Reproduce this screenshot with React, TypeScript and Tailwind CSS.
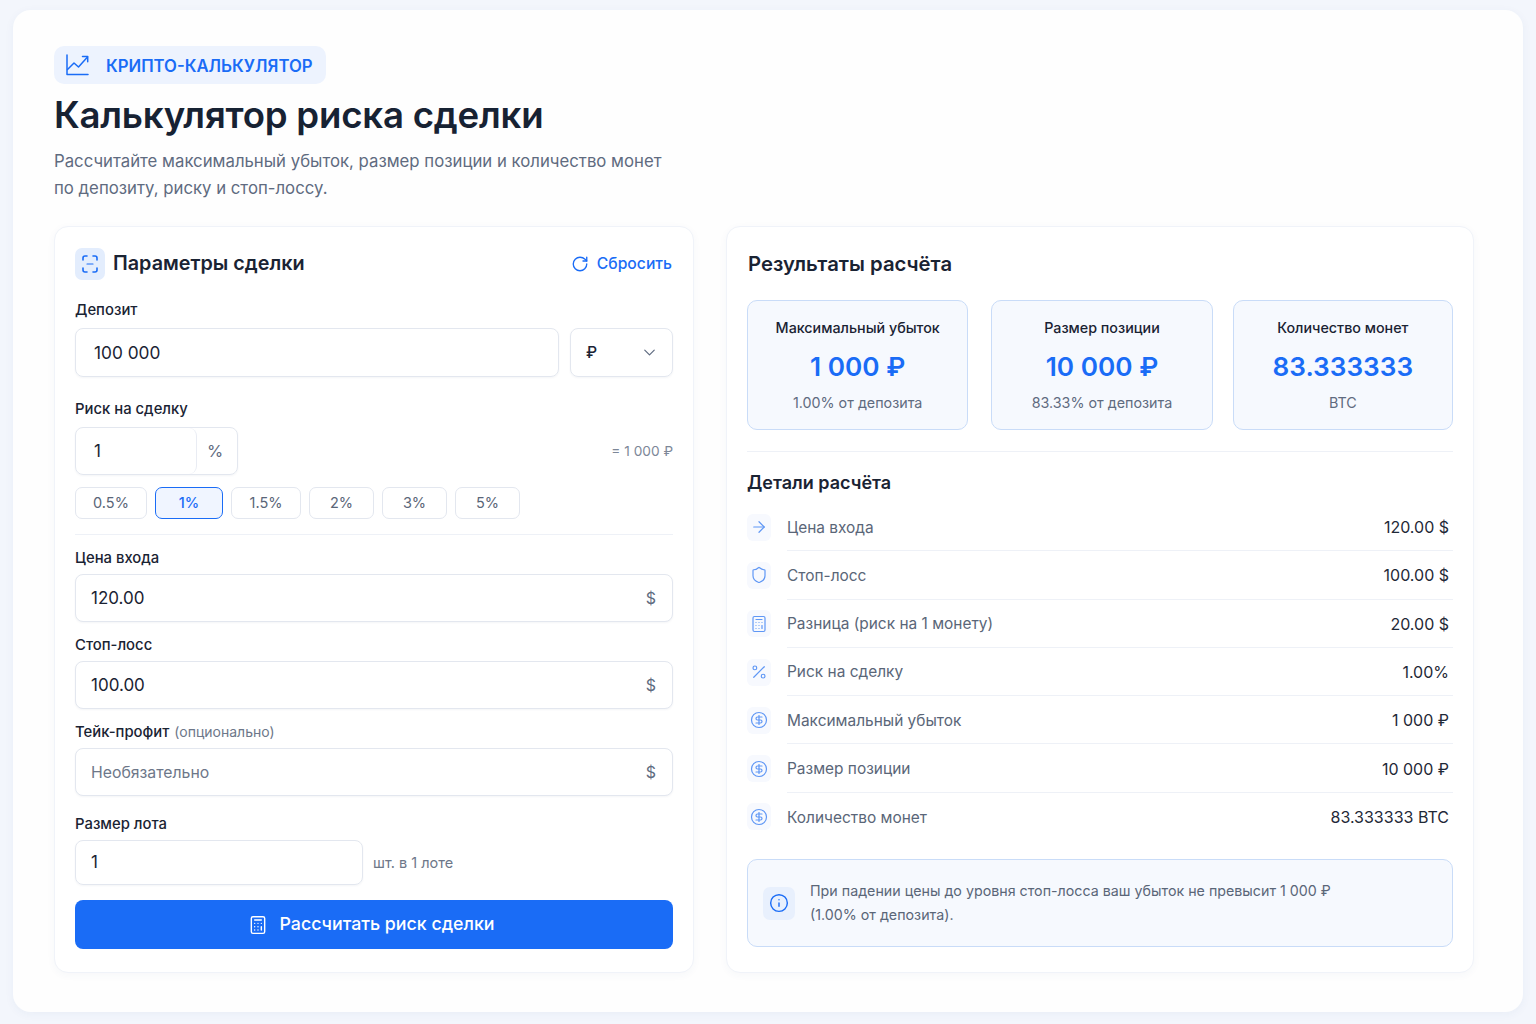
import { ArrowRight, Calculator, ChevronDown, CircleDollarSign, Info, Percent, RotateCw, Shield } from "lucide-react";
import type { ReactNode } from "react";

function Label({ children, className = "" }: { children: ReactNode; className?: string }) {
  return <div className={`text-[14.85px] leading-[20px] font-medium text-[#1a2333] ${className}`}>{children}</div>;
}

function DollarInput({ value, placeholder = false, className = "" }: { value: string; placeholder?: boolean; className?: string }) {
  return (
    <div className={`flex items-center justify-between h-[48px] rounded-[8px] border border-[#e3e7ef] bg-white pl-[15px] pr-[16px] shadow-[0_1px_2px_rgba(30,50,90,0.05)] ${className}`}>
      <span className={placeholder ? "pt-px text-[15.8px] text-[#6d7789]" : "pt-px text-[17px] text-[#1a2333]"}>{value}</span>
      <span className="text-[16px] text-[#5f6b80]">$</span>
    </div>
  );
}

function Chip({ label, w, active = false }: { label: string; w: string; active?: boolean }) {
  return (
    <div className={`${w} h-[32px] flex items-center justify-center rounded-[7px] border text-[14.5px] ${active ? "border-[#1a6cf6] bg-[#f0f5ff] text-[#1a6cf6] font-medium" : "border-[#e3e7ef] bg-white text-[#5a6678]"}`}>
      {label}
    </div>
  );
}

function Stat({ title, value, sub, w }: { title: string; value: string; sub: string; w: string }) {
  return (
    <div className={`${w} h-[130px] flex flex-col items-center rounded-[10px] border border-[#c9dcf8] bg-[#f6f9fe] pt-[17px]`}>
      <div className="text-[14.3px] leading-[20px] font-medium text-[#1a2333]">{title}</div>
      <div className="mt-[11px] text-[26.2px] leading-[36px] font-semibold text-[#1a6cf6]">{value}</div>
      <div className="mt-[8px] text-[14.3px] leading-[20px] text-[#5f6b80]">{sub}</div>
    </div>
  );
}

const rows = [
  { Icon: ArrowRight, label: "Цена входа", value: "120.00 $" },
  { Icon: Shield, label: "Стоп-лосс", value: "100.00 $" },
  { Icon: Calculator, label: "Разница (риск на 1 монету)", value: "20.00 $" },
  { Icon: Percent, label: "Риск на сделку", value: "1.00%" },
  { Icon: CircleDollarSign, label: "Максимальный убыток", value: "1 000 ₽" },
  { Icon: CircleDollarSign, label: "Размер позиции", value: "10 000 ₽" },
  { Icon: CircleDollarSign, label: "Количество монет", value: "83.333333 BTC" },
];

export default function App() {
  return (
    <div className="h-[1024px] overflow-hidden bg-[#f3f6fc] pt-[10px] pl-[13px] pr-[13px] font-['Inter','Noto_Sans',sans-serif]">
      <div className="h-[1002px] rounded-[18px] bg-[#fefefe] pl-[41px] pr-[49px] pt-[36px] shadow-[0_2px_10px_rgba(40,70,130,0.05)]">
        <div className="flex items-center w-[272px] h-[38px] rounded-[10px] bg-[#edf3fe] pl-[12px]">
          <svg width="23" height="22" viewBox="0 0 23 22" fill="none" stroke="#1a6cf6" strokeWidth="1.5" strokeLinecap="round" strokeLinejoin="round">
            <path d="M1 1v19.5h21" />
            <path d="M1.5 15.5 8 9l4.5 4L21.5 3" />
            <path d="M16.5 2.5h5.2v5.2" />
          </svg>
          <span className="ml-[17px] pt-[3px] text-[16.7px] font-semibold text-[#1a6cf6] whitespace-nowrap">КРИПТО-КАЛЬКУЛЯТОР</span>
        </div>
        <h1 className="mt-[8px] text-[36.6px] leading-[46px] font-semibold tracking-[-0.2px] text-[#172233]">Калькулятор риска сделки</h1>
        <p className="mt-[10px] text-[16.75px] leading-[27px] text-[#5f6b80]">
          Рассчитайте максимальный убыток, размер позиции и количество монет
          <br />
          по депозиту, риску и стоп-лоссу.
        </p>

        <div className="mt-[24px] flex gap-[32px]">
          <section className="w-[640px] h-[747px] rounded-[14px] border border-[#f0f3f9] bg-white px-[20px] pt-[20px] shadow-[0_2px_8px_rgba(40,70,130,0.04)]">
            <div className="flex items-center justify-between h-[34px]">
              <div className="flex items-center gap-[8px]">
                <div className="flex items-center justify-center w-[30px] h-[32px] rounded-[7px] bg-[#e3edfd]">
                  <svg width="16" height="18" viewBox="0 0 16 18" fill="none" stroke="#1a6cf6" strokeWidth="1.6" strokeLinecap="round" strokeLinejoin="round">
                    <path d="M5 1H3a2 2 0 0 0-2 2v2M11 1h2a2 2 0 0 1 2 2v2M5 17H3a2 2 0 0 1-2-2v-2M11 17h2a2 2 0 0 0 2-2v-2" />
                    <path d="M5 9h6" strokeWidth="1.1" />
                  </svg>
                </div>
                <span className="text-[19.8px] font-semibold text-[#1a2333]">Параметры сделки</span>
              </div>
              <div className="flex items-center gap-[8px] pr-px text-[#1a6cf6] text-[15.7px] font-medium">
                <RotateCw size={18} strokeWidth={1.8} />
                Сбросить
              </div>
            </div>

            <Label className="mt-[19px]">Депозит</Label>
            <div className="mt-[8px] flex gap-[11px]">
              <div className="flex-1 flex items-center h-[49px] rounded-[8px] border border-[#e3e7ef] pl-[18px] text-[17.3px] text-[#1a2333] shadow-[0_1px_2px_rgba(30,50,90,0.05)]">100 000</div>
              <div className="w-[103px] flex items-center justify-between h-[49px] rounded-[8px] border border-[#e3e7ef] pl-[15px] pr-[13px] text-[15.5px] font-medium text-[#1a2333] shadow-[0_1px_2px_rgba(30,50,90,0.05)]">
                ₽
                <ChevronDown size={19} strokeWidth={1.5} className="text-[#5f6b80]" />
              </div>
            </div>

            <Label className="mt-[22px]">Риск на сделку</Label>
            <div className="mt-[8px] flex items-center justify-between">
              <div className="flex w-[163px] h-[48px] rounded-[8px] border border-[#e3e7ef] shadow-[0_1px_2px_rgba(30,50,90,0.05)]">
                <div className="w-[121px] flex items-center pl-[18px] pt-px rounded-[8px] border-r border-[#e9ecf3] text-[17px] text-[#1a2333]">1</div>
                <div className="flex-1 flex items-center justify-center pr-[4px] text-[16.5px] text-[#5f6b80]">%</div>
              </div>
              <span className="text-[13.7px] text-[#7d8798]">= 1 000 ₽</span>
            </div>
            <div className="mt-[12px] flex gap-[8px]">
              <Chip label="0.5%" w="w-[72px]" />
              <Chip label="1%" w="w-[68px]" active />
              <Chip label="1.5%" w="w-[70px]" />
              <Chip label="2%" w="w-[65px]" />
              <Chip label="3%" w="w-[65px]" />
              <Chip label="5%" w="w-[65px]" />
            </div>
            <div className="mt-[15px] h-px bg-[#eef1f7]" />

            <Label className="mt-[13px]">Цена входа</Label>
            <DollarInput value="120.00" className="mt-[6px]" />
            <Label className="mt-[13px]">Стоп-лосс</Label>
            <DollarInput value="100.00" className="mt-[6px]" />
            <div className="mt-[12px] flex items-baseline gap-[5px]">
              <Label>Тейк-профит</Label>
              <span className="text-[14px] text-[#6d7789]">(опционально)</span>
            </div>
            <DollarInput value="Необязательно" placeholder className="mt-[6px]" />

            <Label className="mt-[18px]">Размер лота</Label>
            <div className="mt-[6px] flex items-center gap-[10px]">
              <div className="flex items-center w-[288px] h-[45px] rounded-[8px] border border-[#e3e7ef] pl-[15px] pt-px text-[17px] text-[#1a2333] shadow-[0_1px_2px_rgba(30,50,90,0.05)]">1</div>
              <span className="text-[14.5px] text-[#6d7789]">шт. в 1 лоте</span>
            </div>
            <div className="mt-[15px] flex items-center justify-center gap-[11px] h-[49px] rounded-[8px] bg-[#1a6cf6] pr-[5px] text-white text-[17.8px] font-medium">
              <Calculator size={20} strokeWidth={1.7} />
              Рассчитать риск сделки
            </div>
          </section>

          <section className="w-[748px] h-[747px] rounded-[14px] border border-[#f0f3f9] bg-white pl-[20px] pr-[20px] pt-[22px] shadow-[0_2px_8px_rgba(40,70,130,0.04)]">
            <h2 className="pl-[1px] text-[20.3px] leading-[30px] font-semibold text-[#1a2333]">Результаты расчёта</h2>
            <div className="mt-[21px] flex">
              <Stat w="w-[222px]" title="Максимальный убыток" value="1 000 ₽" sub="1.00% от депозита" />
              <div className="w-[23px] shrink-0" />
              <Stat w="w-[222px]" title="Размер позиции" value="10 000 ₽" sub="83.33% от депозита" />
              <div className="w-[20px] shrink-0" />
              <Stat w="w-[221px]" title="Количество монет" value="83.333333" sub="BTC" />
            </div>
            <div className="mt-[21px] h-px bg-[#eef1f7]" />
            <h3 className="mt-[20px] text-[18px] leading-[22px] font-semibold text-[#1a2333]">Детали расчёта</h3>
            <div className="mt-[9px]">
              {rows.map(({ Icon, label, value }, i) => (
                <div key={label} className="flex items-center h-[48.3px] gap-[16px]">
                  <div className="flex items-center justify-center shrink-0 w-[24px] h-[27px] rounded-[6px] bg-[#f7f9fe]">
                    <Icon size={18} strokeWidth={1.6} className="text-[#5f97f5]" />
                  </div>
                  <div className={`flex-1 flex items-center justify-between h-full pr-[4px] pt-px ${i < rows.length - 1 ? "border-b border-[#eef1f7]" : ""}`}>
                    <span className="text-[15.45px] text-[#5a6678]">{label}</span>
                    <span className="text-[16px] text-[#1f2937]">{value}</span>
                  </div>
                </div>
              ))}
            </div>
            <div className="mt-[18px] flex items-center h-[88px] rounded-[10px] border border-[#c9dcf8] bg-[#f6f9fe] pl-[15px]">
              <div className="flex items-center justify-center shrink-0 w-[32px] h-[33px] rounded-[7px] bg-[#e8f0fd]">
                <Info size={20} strokeWidth={1.7} className="text-[#1a6cf6]" />
              </div>
              <p className="ml-[15px] text-[14.25px] leading-[24px] text-[#5a6678]">
                При падении цены до уровня стоп-лосса ваш убыток не превысит 1 000 ₽
                <br />
                (1.00% от депозита).
              </p>
            </div>
          </section>
        </div>
      </div>
    </div>
  );
}
